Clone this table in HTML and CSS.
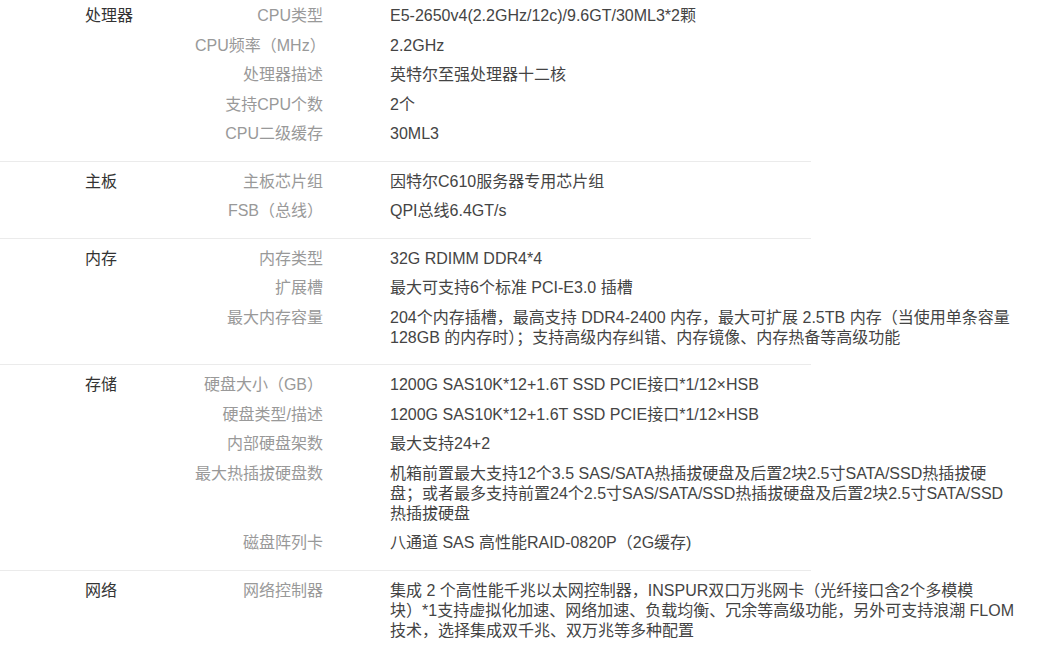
FILE: index.html
```html
<!DOCTYPE html>
<html lang="zh-CN">
<head>
    <meta charset="UTF-8">
    <meta name="viewport" content="width=device-width, initial-scale=1.0">
    <title>规格参数</title>
    <link rel="stylesheet" href="styles.css">
</head>
<body>
    <div class="specs">
        <!-- 处理器 -->
        <div class="group">
            <div class="group-name">处理器</div>
            <div class="rows">
                <div class="row"><span class="label">CPU类型</span><span class="value">E5-2650v4(2.2GHz/12c)/9.6GT/30ML3*2颗</span></div>
                <div class="row"><span class="label">CPU频率（MHz）</span><span class="value">2.2GHz</span></div>
                <div class="row"><span class="label">处理器描述</span><span class="value">英特尔至强处理器十二核</span></div>
                <div class="row"><span class="label">支持CPU个数</span><span class="value">2个</span></div>
                <div class="row"><span class="label">CPU二级缓存</span><span class="value">30ML3</span></div>
            </div>
        </div>
        <!-- 主板 -->
        <div class="group">
            <div class="group-name">主板</div>
            <div class="rows">
                <div class="row"><span class="label">主板芯片组</span><span class="value">因特尔C610服务器专用芯片组</span></div>
                <div class="row"><span class="label">FSB（总线）</span><span class="value">QPI总线6.4GT/s</span></div>
            </div>
        </div>
        <!-- 内存 -->
        <div class="group">
            <div class="group-name">内存</div>
            <div class="rows">
                <div class="row"><span class="label">内存类型</span><span class="value">32G RDIMM DDR4*4</span></div>
                <div class="row"><span class="label">扩展槽</span><span class="value">最大可支持6个标准 PCI-E3.0 插槽</span></div>
                <div class="row"><span class="label">最大内存容量</span><span class="value">204个内存插槽，最高支持 DDR4-2400 内存，最大可扩展 2.5TB 内存（当使用单条容量<br>128GB 的内存时）；支持高级内存纠错、内存镜像、内存热备等高级功能</span></div>
            </div>
        </div>
        <!-- 存储 -->
        <div class="group">
            <div class="group-name">存储</div>
            <div class="rows">
                <div class="row"><span class="label">硬盘大小（GB）</span><span class="value">1200G SAS10K*12+1.6T SSD PCIE接口*1/12×HSB</span></div>
                <div class="row"><span class="label">硬盘类型/描述</span><span class="value">1200G SAS10K*12+1.6T SSD PCIE接口*1/12×HSB</span></div>
                <div class="row"><span class="label">内部硬盘架数</span><span class="value">最大支持24+2</span></div>
                <div class="row"><span class="label">最大热插拔硬盘数</span><span class="value">机箱前置最大支持12个3.5 SAS/SATA热插拔硬盘及后置2块2.5寸SATA/SSD热插拔硬<br>盘；或者最多支持前置24个2.5寸SAS/SATA/SSD热插拔硬盘及后置2块2.5寸SATA/SSD<br>热插拔硬盘</span></div>
                <div class="row"><span class="label">磁盘阵列卡</span><span class="value">八通道 SAS 高性能RAID-0820P（2G缓存)</span></div>
            </div>
        </div>
        <!-- 网络 -->
        <div class="group">
            <div class="group-name">网络</div>
            <div class="rows">
                <div class="row"><span class="label">网络控制器</span><span class="value">集成 2 个高性能千兆以太网控制器，INSPUR双口万兆网卡（光纤接口含2个多模模<br>块）*1支持虚拟化加速、网络加速、负载均衡、冗余等高级功能，另外可支持浪潮 FLOM<br>技术，选择集成双千兆、双万兆等多种配置</span></div>
            </div>
        </div>
    </div>
</body>
</html>
```

FILE: styles.css
```css
* {
    margin: 0;
    padding: 0;
    box-sizing: border-box;
}
body {
    background: #fff;
    color: #333;
    font-family: "Liberation Sans", "Noto Sans CJK SC", sans-serif;
    font-size: 16px;
    line-height: 20px;
}
.specs {
    width: 811px;
}
.group {
    display: flex;
    padding: 10px 0 7px 85px;
    border-bottom: 1px solid #ebebeb;
}
.group:first-child {
    padding-top: 6px;
}
.group-name {
    flex-shrink: 0;
    width: 110px;
    color: #333;
}
.row {
    display: flex;
    padding-bottom: 9.5px;
}
.label {
    flex-shrink: 0;
    width: 128px;
    text-align: right;
    color: #999;
    white-space: nowrap;
}
.value {
    flex-shrink: 0;
    margin-left: 67px;
    color: #444;
    white-space: nowrap;
}
```
